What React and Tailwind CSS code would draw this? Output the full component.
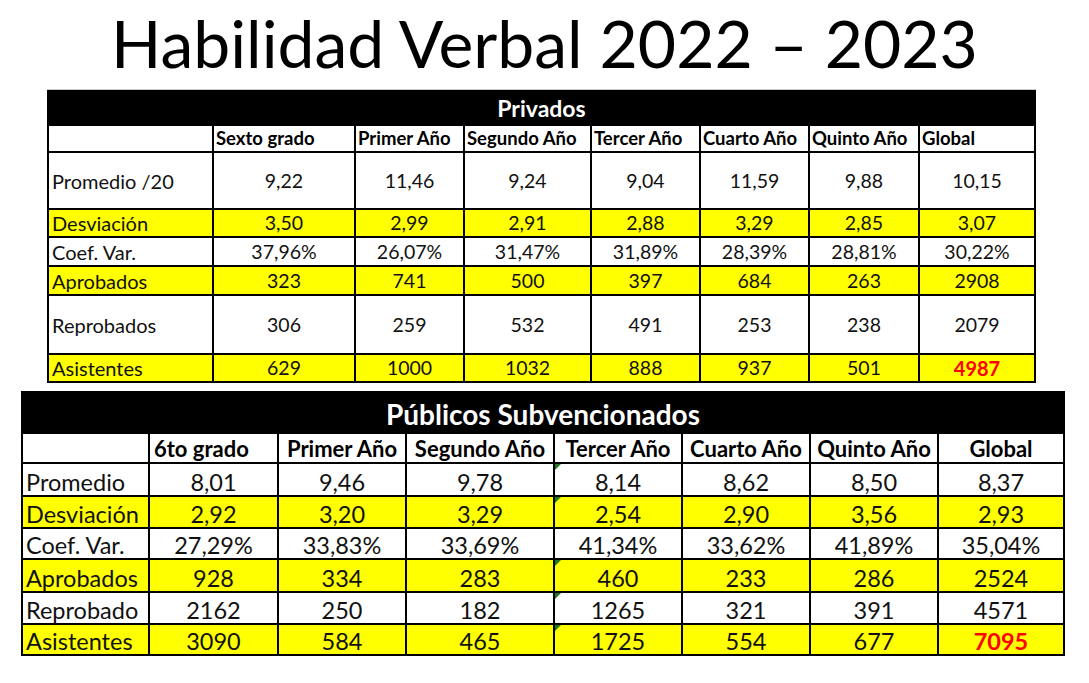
const font = { fontFamily: 'Lato, "Open Sans", "Liberation Sans", sans-serif' }

const privHeaders = ['Sexto grado', 'Primer Año', 'Segundo Año', 'Tercer Año', 'Cuarto Año', 'Quinto Año', 'Global']
const privRows = [
  { label: 'Promedio /20', h: 'h-[55px]', yellow: false, values: ['9,22', '11,46', '9,24', '9,04', '11,59', '9,88', '10,15'] },
  { label: 'Desviación', h: 'h-[26px]', yellow: true, values: ['3,50', '2,99', '2,91', '2,88', '3,29', '2,85', '3,07'] },
  { label: 'Coef. Var.', h: 'h-[27px]', yellow: false, values: ['37,96%', '26,07%', '31,47%', '31,89%', '28,39%', '28,81%', '30,22%'] },
  { label: 'Aprobados', h: 'h-[27px]', yellow: true, values: ['323', '741', '500', '397', '684', '263', '2908'] },
  { label: 'Reprobados', h: 'h-[57px]', yellow: false, values: ['306', '259', '532', '491', '253', '238', '2079'] },
  { label: 'Asistentes', h: 'h-[26px]', yellow: true, total: true, values: ['629', '1000', '1032', '888', '937', '501', '4987'] },
]

const pubHeaders = ['6to grado', 'Primer Año', 'Segundo Año', 'Tercer Año', 'Cuarto Año', 'Quinto Año', 'Global']
const pubRows = [
  { label: 'Promedio', h: 'h-[31px]', yellow: false, flag: true, values: ['8,01', '9,46', '9,78', '8,14', '8,62', '8,50', '8,37'] },
  { label: 'Desviación', h: 'h-[30px]', yellow: true, flag: true, values: ['2,92', '3,20', '3,29', '2,54', '2,90', '3,56', '2,93'] },
  { label: 'Coef. Var.', h: 'h-[29px]', yellow: false, values: ['27,29%', '33,83%', '33,69%', '41,34%', '33,62%', '41,89%', '35,04%'] },
  { label: 'Aprobados', h: 'h-[31px]', yellow: true, flag: true, values: ['928', '334', '283', '460', '233', '286', '2524'] },
  { label: 'Reprobado', h: 'h-[30px]', yellow: false, flag: true, values: ['2162', '250', '182', '1265', '321', '391', '4571'] },
  { label: 'Asistentes', h: 'h-[29px]', yellow: true, flag: true, total: true, values: ['3090', '584', '465', '1725', '554', '677', '7095'] },
]

// little green excel error marker
const Flag = () => (
  <span className="absolute left-0 top-0 w-0 h-0 border-t-[6px] border-t-[#1f7a1f] border-r-[6px] border-r-transparent" />
)

function Privados() {
  return (
    <div className="ml-[47px] w-[989px] border-t border-[#c8c8c8]">
      <div className="grid grid-cols-[163px_140px_107px_125px_107px_107px_108px_114px] gap-[2px] bg-black px-[2px] pb-[2px]">
        <div className="col-span-8 h-[34px] flex items-center justify-center text-white font-bold text-[23px] leading-none pt-[2px]">
          Privados
        </div>
        <div className="h-[25px] bg-white" />
        {privHeaders.map((h) => (
          <div key={h} className="h-[25px] bg-white flex items-center pl-[2px] font-bold text-[18.5px] text-black leading-none whitespace-nowrap">
            {h}
          </div>
        ))}
        {privRows.map((r) => (
          <div key={r.label} className="contents">
            <div className={`${r.h} ${r.yellow ? 'bg-[#ffff00]' : 'bg-white'} flex items-center pl-[3px] text-[20px] text-[#111] leading-none`}>
              {r.label}
            </div>
            {r.values.map((v, i) => (
              <div
                key={i}
                className={`${r.h} ${r.yellow ? 'bg-[#ffff00]' : 'bg-white'} flex items-center justify-center leading-none ${
                  r.total && i === 6 ? 'text-[#ff0000] font-bold text-[20px]' : 'text-[#111] text-[19.5px]'
                }`}
              >
                {v}
              </div>
            ))}
          </div>
        ))}
      </div>
    </div>
  )
}

function Publicos() {
  return (
    <div className="ml-[21px] mt-[8px] w-[1044px] grid grid-cols-[125px_127px_126px_146px_126px_126px_126px_124px] gap-[2px] bg-black p-[2px]">
      <div className="col-span-8 h-[39px] flex items-center justify-center text-white font-bold text-[28px] leading-none pt-[2px]">
        Públicos Subvencionados
      </div>
      <div className="h-[28px] bg-white" />
      {pubHeaders.map((h, i) => (
        <div
          key={h}
          className={`h-[28px] bg-white flex items-center ${i === 0 ? 'pl-[4px]' : 'justify-center'} font-bold text-[22px] text-black leading-none whitespace-nowrap pt-[2px]`}
        >
          {h}
        </div>
      ))}
      {pubRows.map((r) => (
        <div key={r.label} className="contents">
          <div className={`${r.h} ${r.yellow ? 'bg-[#ffff00]' : 'bg-white'} flex items-end pl-[3px] text-[23.5px] text-[#111] leading-[26px] whitespace-nowrap`}>
            {r.label}
          </div>
          {r.values.map((v, i) => (
            <div
              key={i}
              className={`relative ${r.h} ${r.yellow ? 'bg-[#ffff00]' : 'bg-white'} flex items-end justify-center leading-[26px] ${
                r.total && i === 6 ? 'text-[#ff0000] font-bold text-[23.5px]' : 'text-[#111] text-[23.5px]'
              }`}
            >
              {r.flag && i === 3 && <Flag />}
              {v}
            </div>
          ))}
        </div>
      ))}
    </div>
  )
}

export default function App() {
  return (
    <div className="w-[1089px] h-[683px] bg-white overflow-hidden" style={font}>
      <h1 className="h-[89px] leading-[85px] text-center text-[66px] text-black font-normal">
        Habilidad Verbal 2022 – 2023
      </h1>
      <Privados />
      <Publicos />
    </div>
  )
}
